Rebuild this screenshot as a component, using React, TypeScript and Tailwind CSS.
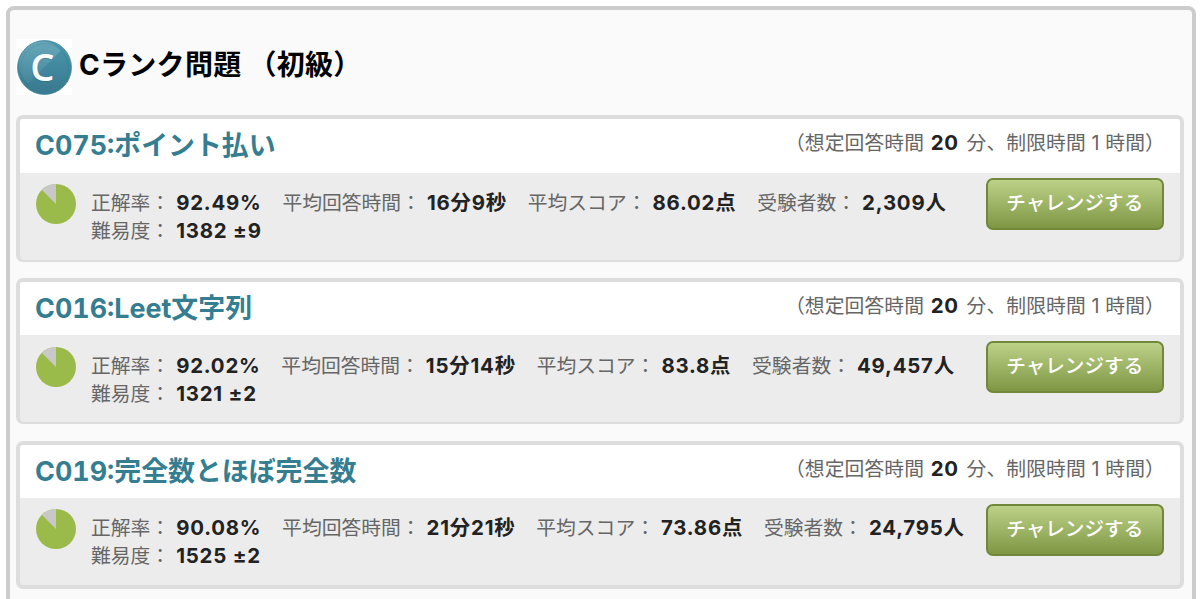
import React from "react";

// Interfaces
interface IProblem {
  id: string;
  title: string;
  rate: string;
  time: string;
  score: string;
  people: string;
  level: string;
}

type ProblemProps = {
  problem: IProblem;
  className: string;
};

type StatProps = {
  label: string;
  value: string;
};

const problems: IProblem[] = [
  { id: "C075", title: "ポイント払い", rate: "92.49%", time: "16分9秒", score: "86.02点", people: "2,309人", level: "1382 ±9" },
  { id: "C016", title: "Leet文字列", rate: "92.02%", time: "15分14秒", score: "83.8点", people: "49,457人", level: "1321 ±2" },
  { id: "C019", title: "完全数とほぼ完全数", rate: "90.08%", time: "21分21秒", score: "73.86点", people: "24,795人", level: "1525 ±2" },
];

// The last card has a thicker bottom border
const cardClasses = ["h-[146.5px] border-b-2", "h-[146.5px] border-b-2", "h-[148px] border-b-4"];

const RankBadge = () => (
  <svg width="56" height="56" viewBox="0 0 56 56" className="bg-white">
    <defs>
      <linearGradient id="badge" x1="0" y1="0" x2="0" y2="1">
        <stop offset="0" stopColor="#4a98ae" />
        <stop offset="1" stopColor="#38788e" />
      </linearGradient>
      <linearGradient id="shine" x1="0" y1="0" x2="0" y2="1">
        <stop offset="0" stopColor="#fff" stopOpacity="0.16" />
        <stop offset="1" stopColor="#fff" stopOpacity="0.05" />
      </linearGradient>
    </defs>
    <circle cx="28.5" cy="28.5" r="27" fill="url(#badge)" stroke="#4a8a9d" strokeWidth="0.8" />
    <circle cx="28.5" cy="28.5" r="23.8" fill="none" stroke="#3a7e92" strokeOpacity="0.7" strokeWidth="1" />
    <path d="M45 11.5A23.5 23.5 0 1 0 12 44.5Z" fill="url(#shine)" />
    <g fontFamily="Open Sans, sans-serif" fontSize="38" fontWeight="600" textAnchor="middle">
      <text x="25.6" y="42.8" fill="#2d6477" fillOpacity="0.4">C</text>
      <text x="26.4" y="42" fill="#fff">C</text>
    </g>
  </svg>
);

const Pie = () => (
  <svg width="40" height="40" viewBox="0 0 40 40" className="shrink-0">
    <circle cx="20" cy="20" r="20" fill="#9abb4a" />
    <path d="M20 20V0A20 20 0 0 0 5.9 5.9Z" fill="#c8c8c8" />
  </svg>
);

const Stat = ({ label, value }: StatProps) => (
  <div className="flex whitespace-nowrap">
    <span>{label}：</span>
    <strong className="ml-[6px] text-[20.4px] font-bold text-[#222] tracking-[0.8px]">{value}</strong>
  </div>
);

const Problem = ({ problem, className }: ProblemProps) => {
  return (
    <section className={`box-border flex flex-col overflow-hidden rounded-[7px] border-4 border-[#ddd] bg-[#ececec] ${className}`}>
      <div className="flex h-[53.5px] shrink-0 justify-between bg-white pl-[15px] pr-[15px]">
        <h2 className="text-[26.9px] leading-[52px] font-bold tabular-nums text-[#357d90]">
          {problem.id}:{problem.title}
        </h2>
        <p className="text-[19.8px] leading-[48px] text-[#666] whitespace-pre tracking-[0.1px]">
          （想定回答時間 <strong className="ml-px mr-[2px] text-[20.4px] font-bold text-[#222] tracking-[0.8px]">20</strong> 分、制限時間 1 時間）
        </p>
      </div>
      <div className="flex pl-[15.5px] pr-[16px]">
        <div className="pt-[11.3px]">
          <Pie />
        </div>
        <div className="ml-[15.5px] flex-1 pt-[16.3px] text-[19.8px] leading-7 text-[#666]">
          <div className="flex gap-[20.8px]">
            <Stat label="正解率" value={problem.rate} />
            <Stat label="平均回答時間" value={problem.time} />
            <Stat label="平均スコア" value={problem.score} />
            <Stat label="受験者数" value={problem.people} />
          </div>
          <Stat label="難易度" value={problem.level} />
        </div>
        <button className="mt-[5.5px] h-[52px] w-[178.5px] shrink-0 rounded-[7px] border-2 border-[#71883a] bg-linear-to-b from-[#bdd188] to-[#7f9744] text-[19.6px] font-medium text-white">
          チャレンジする
        </button>
      </div>
    </section>
  );
};

const App = () => {
  return (
    <div className="h-[599px] overflow-hidden bg-white pt-[6px] pl-[6px] pr-1 font-['Inter','Noto_Sans_CJK_JP',sans-serif]">
      <main className="h-[620px] rounded-[8px] border-4 border-[#ccc] bg-[#fafafa] pl-[6px] pr-2 pt-[29px]">
        <header className="flex h-[56px]">
          <RankBadge />
          <h1 className="ml-[7px] text-[28px] leading-[52px] font-bold tracking-[0.3px] text-black whitespace-pre">Cランク問題 （初級）</h1>
        </header>
        <div className="mt-5 flex flex-col gap-[16.3px]">
          {problems.map((problem, index) => (
            <Problem key={problem.id} problem={problem} className={cardClasses[index]} />
          ))}
        </div>
      </main>
    </div>
  );
};

export default App;
